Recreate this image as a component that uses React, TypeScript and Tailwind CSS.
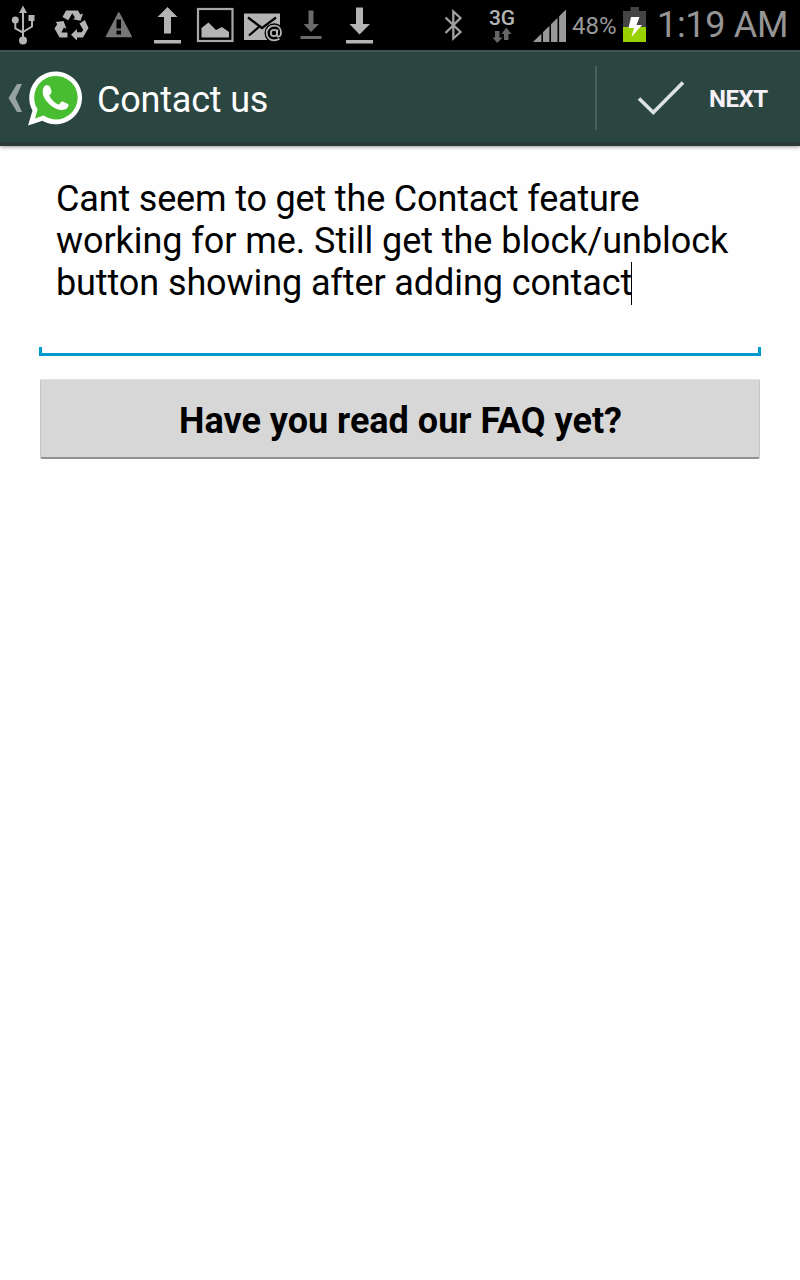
import type { ReactNode } from "react";

type IconProps = { x: number; w: number; y?: number; h?: number; children: ReactNode };

// Icons share one coordinate system; x and w select the slot each one fills.
function Icon({ x, w, y = 0, h = 50, children }: IconProps) {
  return (
    <svg className="block shrink-0" width={w} height={h} viewBox={`${x} ${y} ${w} ${h}`} fill="none">
      {children}
    </svg>
  );
}

function StatusBar() {
  return (
    <div className="flex h-[50px] shrink-0 items-start bg-black">
      <Icon x={0} w={46}>
        <path d="M23 8V40M23 32.500L15.300 28.500V21M23 32L32 26.500V18" stroke="#b4b4b4" strokeWidth="2" />
        <path d="M23 5.500L27 13H19Z" fill="#b4b4b4" />
        <circle cx="15.300" cy="20" r="3.500" fill="#b4b4b4" />
        <rect x="28.500" y="15" width="6" height="6" fill="#b4b4b4" />
        <circle cx="23" cy="40.500" r="4" fill="#b4b4b4" />
      </Icon>
      <Icon x={46} w={50}>
        <g fill="#b4b4b4">
          <path d="M66 10.500H78L80.300 14.500L83 13.500L80.500 20.800L73 19.300L75 17.800L72.300 13.300L68.300 20.300L62.500 17Z" />
          <path d="M55.500 22L63.500 21L66.500 28.800L63.900 27.500L61.300 32.500H67.500V37.500H59.500L54.500 28.500L57.300 24Z" />
          <path d="M79.500 23.500L84.800 20L88.500 28L83 37.500H77V40.500L71 34.800L77 29V32.300H81.500L83.300 30Z" />
        </g>
      </Icon>
      <Icon x={96} w={48}>
        <path d="M118.800 12.800L131.200 36.500H106.500Z" fill="#777" stroke="#777" strokeWidth="1.500" strokeLinejoin="round" />
        <path d="M116.500 19.500H121V28.500H116.500ZM116.500 30.500H121V34.500H116.500Z" fill="#000" />
      </Icon>
      <Icon x={144} w={46}>
        <path d="M167.500 7L177.500 17H171V33.500H164V17H157.500Z" fill="#b4b4b4" />
        <path d="M154 40H181V43.500H154Z" fill="#b4b4b4" />
      </Icon>
      <Icon x={190} w={48}>
        <rect x="198" y="9" width="34.500" height="32" stroke="#a8a8a8" strokeWidth="2.200" />
        <path d="M201.500 37.500V28L208.500 22.500L216 30L222 27L229 32V37.500Z" fill="#b4b4b4" />
      </Icon>
      <Icon x={238} w={52}>
        <rect x="244" y="13.500" width="36" height="26.500" fill="#b4b4b4" />
        <path d="M248 17.500L262 28L276 17.500M249 35.500L260 26" stroke="#000" strokeWidth="2.200" />
        <circle cx="274.300" cy="33" r="9.800" fill="#000" />
        <circle cx="274" cy="33" r="3.200" stroke="#b4b4b4" strokeWidth="1.800" />
        <path d="M277.500 29.500L276.800 34.500C276.800 38 281 37 281 32.500C281 28 278 25.700 274.300 25.700C270 25.700 266.700 28.800 266.700 33C266.700 37.500 270 40.300 274 40.300C276 40.300 278 39.800 279.500 38.800" stroke="#b4b4b4" strokeWidth="1.800" />
      </Icon>
      <Icon x={290} w={45}>
        <path d="M308.500 10.500H313.500V24H319L311 32L303.500 24H308.500Z" fill="#6a6a6a" />
        <path d="M300.500 36H321.500V39H300.500Z" fill="#6a6a6a" />
      </Icon>
      <Icon x={335} w={100}>
        <path d="M356 7.500H363V24H370L359.500 34.500L349.500 24H356Z" fill="#b4b4b4" />
        <path d="M346 40H373V43.500H346Z" fill="#b4b4b4" />
      </Icon>
      <Icon x={435} w={53}>
        <path d="M445.500 17.500L460.500 32L453.300 38.500V11.500L460.500 18L445.500 33" stroke="#a0a0a0" strokeWidth="2.300" />
      </Icon>
      <div className="flex w-7 shrink-0 flex-col items-center pt-[7px]">
        <span className="block h-5 font-['Roboto',sans-serif] text-[21px] leading-[22px] font-medium text-[#b4b4b4]">3G</span>
        <Icon x={488} w={28} y={27} h={17}>
          <path d="M495 31H499.500V37.500H502.500L497.300 43L492.500 37.500H495ZM504 40H508.500V34H511.500L506.300 27.500L501.500 34H504Z" fill="#666" />
        </Icon>
      </div>
      <Icon x={516} w={56}>
        <path d="M533 42L566 9.500V42Z" fill="#999" />
        <path d="M542.200 30V42M550.200 22V42M558.300 14V42" stroke="#000" strokeWidth="1.600" />
      </Icon>
      <span className="block w-12 shrink-0 pt-3 font-['Roboto',sans-serif] text-[24px] leading-7 whitespace-nowrap text-[#999]">48%</span>
      <Icon x={620} w={37}>
        <path d="M630.500 7H639V11H646V42H623V11H630.500Z" fill="#444" />
        <path d="M623 27H646V42H623Z" fill="#99d000" />
        <path d="M631 17H639.500L636.500 25H642L631.500 37L634 28H628.500Z" fill="#fff" />
      </Icon>
      <span className="block shrink-0 pt-1 font-['Roboto',sans-serif] text-[36px] leading-[42px] tracking-[-0.3px] whitespace-nowrap text-[#959595]">1:19 AM</span>
    </div>
  );
}

function ActionBar() {
  return (
    <header className="flex h-24 shrink-0 items-start border-t-2 border-b-4 border-t-[#3e5657] border-b-[#2a3938] bg-[#2b4541] shadow-[0_1px_4px_rgba(0,0,0,0.4)]">
      <button className="flex items-start text-left">
        <Icon x={0} w={97} y={52} h={90}>
          <path d="M17 84H22L15.500 98L22 112H17L8.500 98Z" fill="#95a2a0" />
          <path d="M28 125.500L32.500 110.500A26.400 26.400 0 1 1 42.500 120.700Z" fill="#fff" />
          <path d="M35 118.500L37.600 109.500A21.800 21.800 0 1 1 43.500 115.600Z" fill="#48bd31" />
          <path d="M45.500 85.500C47 84.800 49.200 85.300 50 87L51.500 91C52 92.500 50.700 94 49.200 95.500C51.200 99.500 54.700 103 58.700 104.800C60.200 103.500 61.200 101 62.700 101.500L68 104.100C69.300 105 68 108 66 109C62.500 110.800 58.300 110.200 53.300 107.200C47.800 103.700 43 97.500 42.700 92.500C42.500 89.500 43.500 86.500 45.500 85.500Z" fill="#fff" />
        </Icon>
        <h1 className="pt-[27px] font-['Roboto',sans-serif] text-[36px] leading-[42px] tracking-[-0.2px] whitespace-nowrap text-white">Contact us</h1>
      </button>
      <button className="mt-3.5 ml-auto flex h-16 w-[205px] items-start border-l-2 border-[#4a605d]">
        <Icon x={597} w={112} y={66} h={64}>
          <path d="M639 98.500L653.300 112.500L683 82.500" stroke="#dce1e1" strokeWidth="3.600" />
        </Icon>
        <span className="pt-[19px] font-['Roboto',sans-serif] text-[24px] leading-7 font-bold tracking-[-0.5px] whitespace-nowrap text-[#f5f1f7]">NEXT</span>
      </button>
    </header>
  );
}

export default function App() {
  return (
    <div className="flex h-[1280px] w-[800px] flex-col overflow-hidden bg-[#fefefe] font-['Roboto',sans-serif]">
      <StatusBar />
      <ActionBar />
      <main className="flex flex-col pt-8 pr-[39px] pl-[39px]">
        <div className="flex h-[178px] flex-col">
          <div className="flex h-[169px] flex-col pl-[17px] text-[36px] leading-[42px] whitespace-nowrap text-black">
            <span className="tracking-[-0.17px]">Cant seem to get the Contact feature</span>
            <span className="tracking-[-0.06px]">working for me. Still get the block/unblock</span>
            <span className="flex tracking-[-0.1px]">
              button showing after adding contact
              <span className="-ml-px h-[43px] w-px bg-black" />
            </span>
          </div>
          <div className="h-[9px] shrink-0 border-x-[3px] border-b-[3px] border-[#0099cc]" />
        </div>
        <button className="mx-px mt-[23px] h-20 rounded-[2px] border border-t-[#e2e2e2] border-r-[#c4c4c4] border-b-2 border-b-[#919191] border-l-[#c4c4c4] bg-[#d7d7d7] pt-1 pl-px text-[36px] leading-[42px] font-bold whitespace-nowrap text-black">
          Have you read our FAQ yet?
        </button>
      </main>
    </div>
  );
}
